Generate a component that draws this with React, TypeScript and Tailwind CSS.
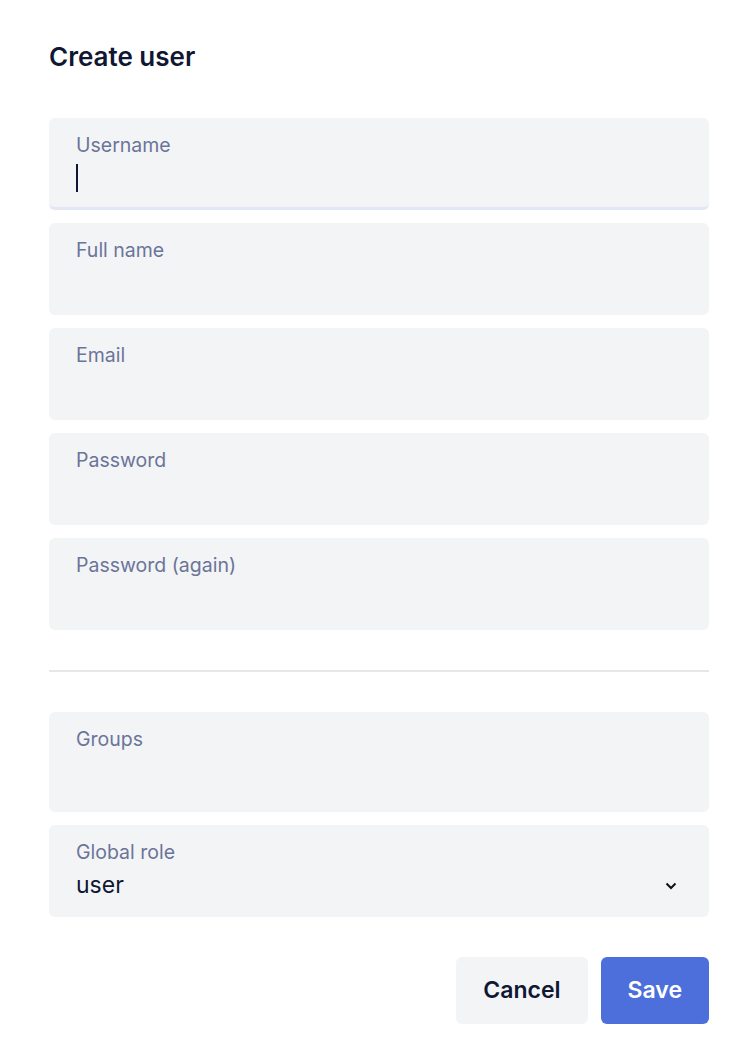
import { useState } from 'react';

const fields = ['Full name', 'Email', 'Password', 'Password (again)'];

function Field({ label, focused }: { label: string; focused?: boolean }) {
  return (
    <div
      className={`rounded-md bg-[#f3f4f6] px-[27px] pt-[13px] ${
        focused ? 'border-b-[3px] border-[#e3e6f4] pb-[10px]' : 'pb-[13px]'
      }`}
    >
      <div className="text-[19.5px] leading-7 text-[#6b7499]">{label}</div>
      <div className="flex h-[38px] items-center">
        {focused && <span className="block h-[28px] w-[2px] bg-[#0f1733]" />}
      </div>
    </div>
  );
}

export default function App() {
  const [role] = useState('user');

  return (
    <div className="min-h-screen bg-white font-['Inter',sans-serif] text-[#0f1733]">
      <div className="ml-[49px] w-[660px] pt-[41px]">
        <h1 className="text-[26px] font-semibold leading-8">Create user</h1>

        <div className="mt-[45px] flex flex-col gap-[13px]">
          <Field label="Username" focused />
          {fields.map(f => (
            <Field key={f} label={f} />
          ))}
        </div>

        <div className="my-[40px] h-[2px] bg-[#e5e7eb]" />

        <div className="flex flex-col gap-[13px]">
          <div className="rounded-md bg-[#f3f4f6] px-[27px] pt-[13px] pb-[13px]">
            <div className="text-[19.5px] leading-7 text-[#6b7499]">Groups</div>
            <div className="h-[46px]" />
          </div>
          <div className="rounded-md bg-[#f3f4f6] pl-[27px] pr-[32px] pt-[13px] pb-[13px]">
            <div className="text-[19.5px] leading-7 text-[#6b7499]">Global role</div>
            <div className="flex h-[38px] items-center justify-between">
              <span className="text-[23px] leading-7 text-[#0f1733]">{role}</span>
              <svg width="12" height="8" viewBox="0 0 12 8" fill="none" className="mt-[2px]">
                <path d="M1.5 1.5 6 6l4.5-4.5" stroke="#111" strokeWidth="2" />
              </svg>
            </div>
          </div>
        </div>

        <div className="mt-[40px] flex justify-end gap-[13px]">
          <button
            type="button"
            className="h-[67px] rounded-md bg-[#f3f4f6] px-[27px] text-[23px] font-semibold text-[#0f1733]"
          >
            Cancel
          </button>
          <button
            type="button"
            className="h-[67px] rounded-md bg-[#4d6fdb] px-[27px] text-[23px] font-semibold text-white"
          >
            Save
          </button>
        </div>
      </div>
    </div>
  );
}
